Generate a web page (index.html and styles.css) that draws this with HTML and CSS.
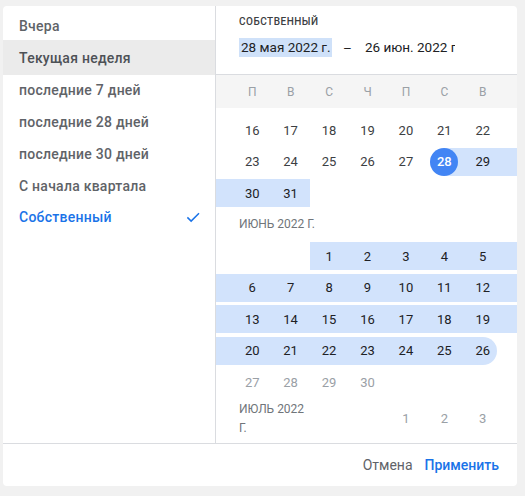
FILE: index.html
```html
<!DOCTYPE html>
<html lang="ru">
<head>
    <meta charset="UTF-8">
    <title>Период</title>
    <link rel="stylesheet" href="styles.css">
</head>
<body>
    <div class="picker">
        <div class="main">
            <ul class="presets">
                <li>Вчера</li>
                <li class="hover">Текущая неделя</li>
                <li>последние 7 дней</li>
                <li>последние 28 дней</li>
                <li>последние 30 дней</li>
                <li>С начала квартала</li>
                <li class="selected">Собственный
                    <svg class="check" width="18" height="18" viewBox="0 0 24 24"><path d="M4.5 12.5l5 5L20 7" fill="none" stroke="#1a73e8" stroke-width="2"/></svg>
                </li>
            </ul>
            <div class="calendar">
                <div class="cal-head">
                    <div class="label">Собственный</div>
                    <div class="range">
                        <span class="date active">28 мая 2022 г.</span>
                        <span class="dash">–</span>
                        <span class="date last">26 июн. 2022 г.</span>
                    </div>
                </div>
                <div class="weekdays">
                    <span>П</span><span>В</span><span>С</span><span>Ч</span><span>П</span><span>С</span><span>В</span>
                </div>
                <div class="days">
                    <div class="week">
                        <i></i><b>16</b><b>17</b><b>18</b><b>19</b><b>20</b><b>21</b><b>22</b><i></i>
                    </div>
                    <div class="week">
                        <i></i><b>23</b><b>24</b><b>25</b><b>26</b><b>27</b><b class="start"><em>28</em></b><b class="in">29</b><i class="in"></i>
                    </div>
                    <div class="week">
                        <i class="in"></i><b class="in">30</b><b class="in">31</b><b></b><b></b><b></b><b></b><b></b><i></i>
                    </div>
                    <div class="week">
                        <i></i><span class="month wide">Июнь 2022 г.</span><i></i>
                    </div>
                    <div class="week">
                        <i></i><b></b><b></b><b class="in">1</b><b class="in">2</b><b class="in">3</b><b class="in">4</b><b class="in">5</b><i class="in"></i>
                    </div>
                    <div class="week">
                        <i class="in"></i><b class="in">6</b><b class="in">7</b><b class="in">8</b><b class="in">9</b><b class="in">10</b><b class="in">11</b><b class="in">12</b><i class="in"></i>
                    </div>
                    <div class="week">
                        <i class="in"></i><b class="in">13</b><b class="in">14</b><b class="in">15</b><b class="in">16</b><b class="in">17</b><b class="in">18</b><b class="in">19</b><i class="in"></i>
                    </div>
                    <div class="week">
                        <i class="in"></i><b class="in">20</b><b class="in">21</b><b class="in">22</b><b class="in">23</b><b class="in">24</b><b class="in">25</b><b class="end"><em>26</em></b><i></i>
                    </div>
                    <div class="week">
                        <i></i><b class="off">27</b><b class="off">28</b><b class="off">29</b><b class="off">30</b><b></b><b></b><b></b><i></i>
                    </div>
                    <div class="week">
                        <i></i><span class="month">Июль 2022 г.</span><b></b><b></b><b class="off">1</b><b class="off">2</b><b class="off">3</b><i></i>
                    </div>
                </div>
            </div>
        </div>
        <div class="footer">
            <button class="btn">Отмена</button>
            <button class="btn primary">Применить</button>
        </div>
    </div>
</body>
</html>
```

FILE: styles.css
```css
body {
    margin: 0;
    background: #f1f1f1;
    font-family: Roboto, "Noto Sans", sans-serif;
    color: #3c4043;
}

.picker {
    width: 514px;
    height: 480px;
    margin: 6px 0 0 3px;
    background: #fff;
    border-radius: 4px;
    display: flex;
    flex-direction: column;
    overflow: hidden;
}

.main {
    height: 437px;
    display: flex;
    border-bottom: 1px solid #dadce0;
}

.presets {
    width: 212px;
    margin: 0;
    padding: 4px 0 0;
    list-style: none;
    border-right: 1px solid #dadce0;
}

.presets li {
    height: 32px;
    padding: 0 16px;
    display: flex;
    align-items: center;
    justify-content: space-between;
    font-size: 14px;
    font-weight: 500;
    letter-spacing: 0.25px;
    color: #5f6368;
}

.presets li.hover {
    height: 35px;
    margin-top: -2px;
    margin-bottom: -1px;
    background: #ebebeb;
    color: #4d5156;
}

.presets li.selected {
    color: #1a73e8;
    height: 30px;
}

.check {
    margin-right: -3px;
}

.calendar {
    flex: 1;
    display: flex;
    flex-direction: column;
    overflow: hidden;
}

.cal-head {
    height: 68px;
    padding: 0 0 0 23px;
    border-bottom: 1px solid #dadce0;
}

.cal-head .label {
    margin-top: 10px;
    font-size: 10px;
    font-weight: 500;
    letter-spacing: 0.5px;
    text-transform: uppercase;
    color: #3c4043;
}

.range {
    margin-top: 11px;
    display: flex;
    align-items: center;
    font-size: 13.5px;
    color: #202124;
}

.date {
    width: 91px;
    height: 19px;
    line-height: 19px;
    padding-left: 2px;
    white-space: nowrap;
}

.date.active {
    background: #cfe1f9;
}

.date.last {
    width: 96px;
    clip-path: inset(0 6px 0 0);
}

.dash {
    width: 31px;
    text-align: center;
}

.weekdays {
    height: 33px;
    background: #f5f5f5;
    display: grid;
    grid-template-columns: repeat(7, 1fr);
    padding: 0 15px 0 17px;
    align-items: center;
    font-size: 12px;
    color: #9aa0a6;
}

.weekdays span {
    text-align: center;
}

.days {
    flex: 1;
    padding-top: 8px;
    display: flex;
    flex-direction: column;
    gap: 3.5px;
    overflow: hidden;
}

.week {
    min-height: 28px;
    display: grid;
    grid-template-columns: 17px repeat(7, 1fr) 15px;
    align-items: stretch;
    font-size: 13px;
}

.week b {
    font-weight: 400;
    display: flex;
    align-items: center;
    justify-content: center;
}

.week .in {
    background: #d2e3fc;
    color: #202124;
}

.week .off {
    color: #9aa0a6;
}

.week em {
    font-style: normal;
    width: 28px;
    height: 28px;
    border-radius: 50%;
    display: flex;
    align-items: center;
    justify-content: center;
}

.week .start {
    background: linear-gradient(to right, transparent 50%, #d2e3fc 50%);
}

.week .start em {
    background: #4285f4;
    color: #fff;
    font-weight: 500;
}

.week .end {
    background: linear-gradient(to right, #d2e3fc 50%, transparent 50%);
    color: #202124;
}

.week .end em {
    background: #d2e3fc;
}

.month {
    grid-column: span 2;
    padding-left: 6px;
    font-size: 12px;
    line-height: 19px;
    text-transform: uppercase;
    color: #70757a;
    align-self: center;
}

.month.wide {
    grid-column: span 7;
}

.footer {
    flex: 1;
    display: flex;
    justify-content: flex-end;
    align-items: center;
    padding-right: 14px;
    gap: 4px;
}

.btn {
    font-family: inherit;
    font-size: 14px;
    font-weight: 400;
    background: none;
    border: none;
    padding: 4px;
    color: #5f6368;
    cursor: pointer;
}

.btn.primary {
    color: #1a73e8;
    font-weight: 500;
}
```
